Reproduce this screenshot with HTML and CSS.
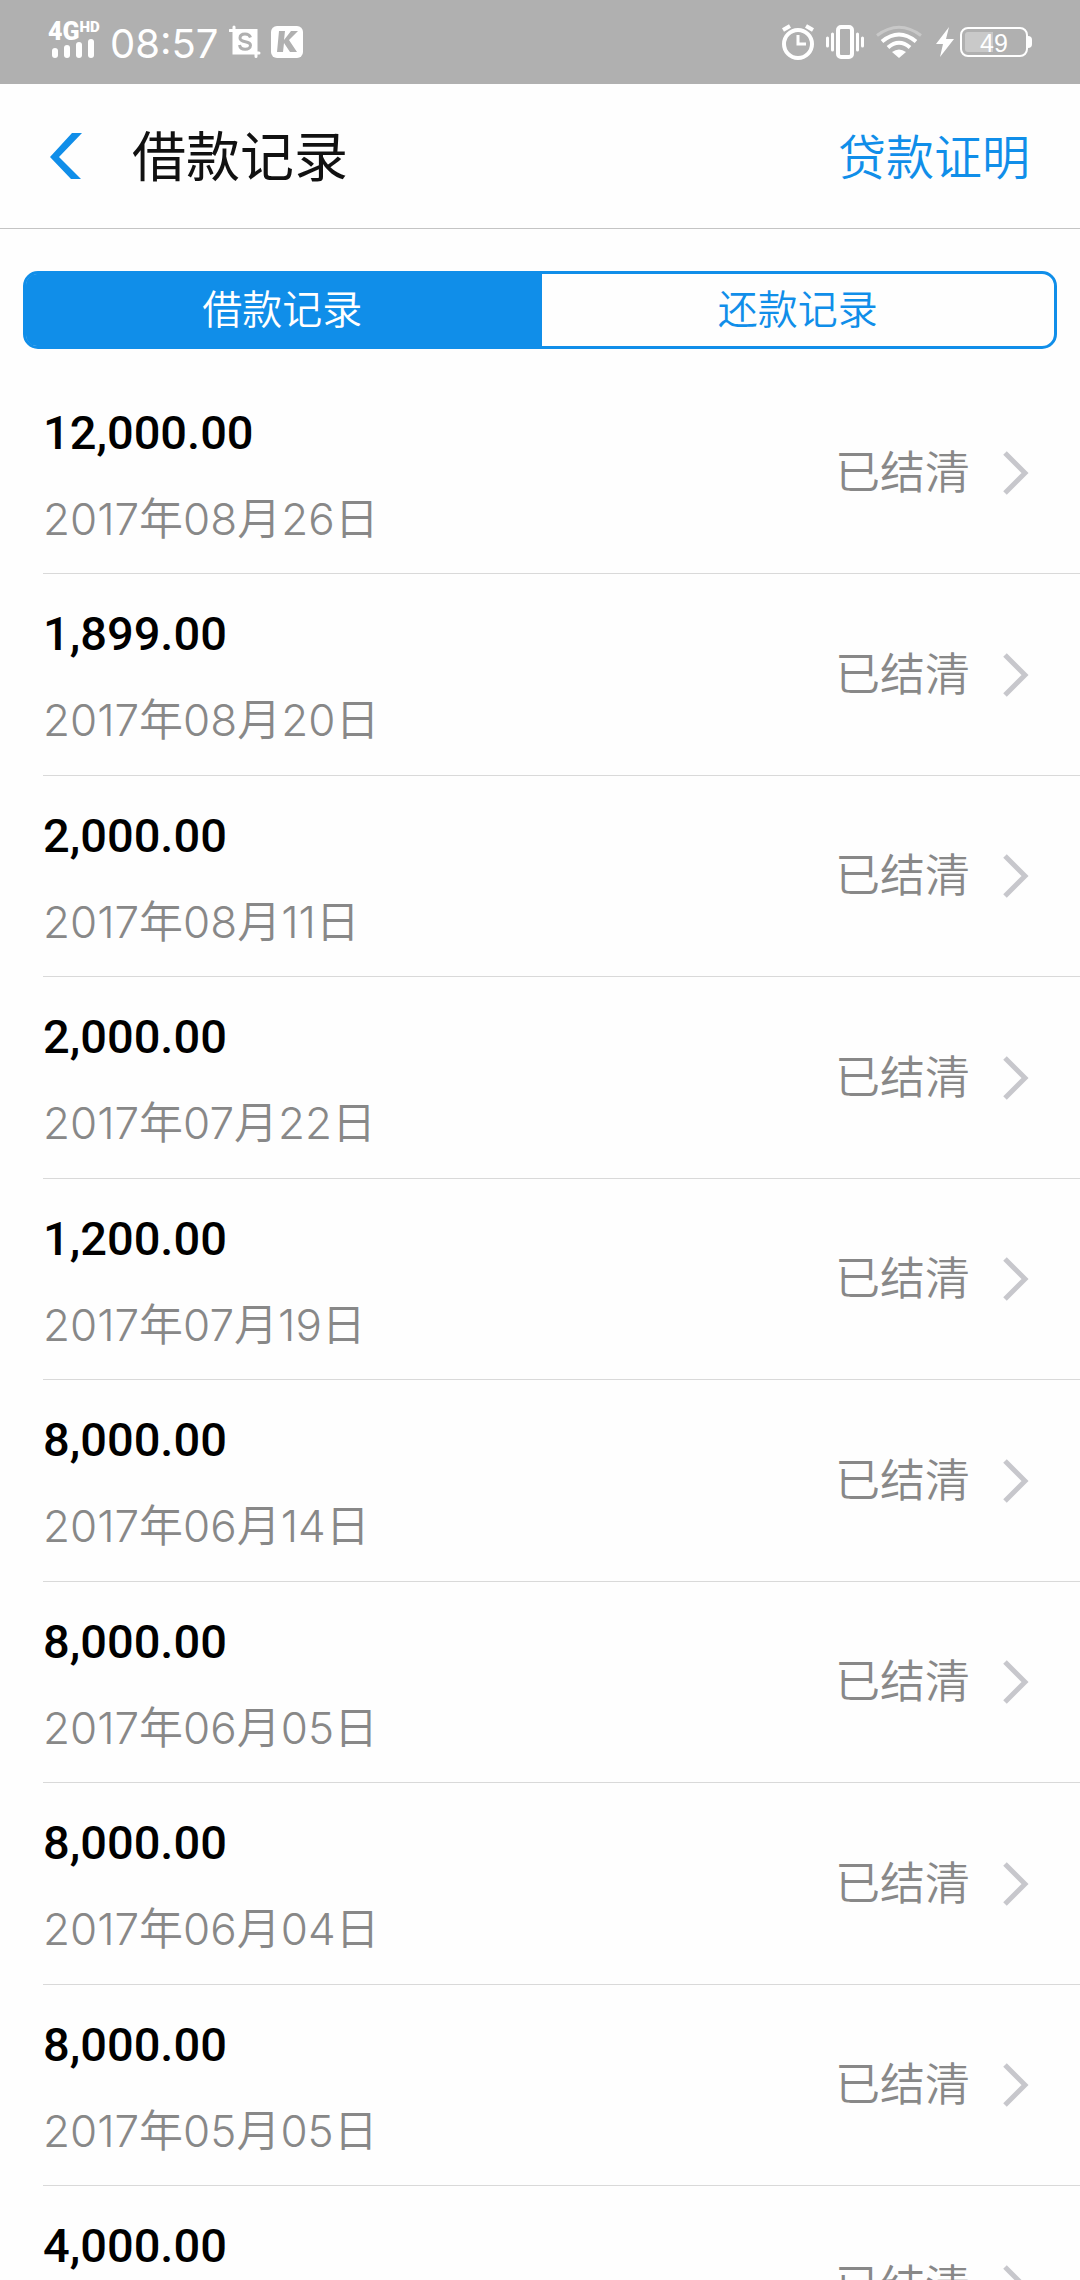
FILE: index.html
```
<!DOCTYPE html>
<html lang="zh-CN">
<head>
<meta charset="utf-8">
<meta name="viewport" content="width=device-width, initial-scale=1">
<title>借款记录</title>
<link rel="stylesheet" href="styles.css">
</head>
<body>
<svg class="defs" aria-hidden="true">
  <symbol id="chevron" viewBox="0 0 26 44"><path d="M2 2 22 22 2 42" fill="none" stroke="#c7c7cc" stroke-width="5"/></symbol>
</svg>
<div class="app">
  <div class="status-bar">
    <div class="status-group status-left">
      <div class="signal">
        <div class="network">4G<span class="hd">HD</span></div>
        <svg class="bars" viewBox="0 0 44 20" aria-hidden="true"><g fill="#fff"><rect x="0" y="9" width="6" height="10" rx="3"/><rect x="12" y="6" width="6" height="13" rx="3"/><rect x="24" y="3" width="6" height="16" rx="3"/><rect x="36" y="0" width="6" height="19" rx="3"/></g></svg>
      </div>
      <time class="clock">08:57</time>
      <svg class="icon-crop" viewBox="0 0 32 34" aria-hidden="true"><path d="M5 2v26h25M1 5.500h26v26" fill="none" stroke="#fff" stroke-width="3" stroke-linecap="round"/><path d="M5 5h22v23H5z" fill="#fff"/><path d="M21.500 12.500c-1-3-3.500-3.500-5.500-3.500-3 0-5 1.500-5 4 0 5.500 10.500 2 10.500 7.300 0 2.700-2.500 4-5.300 4-3 0-5.200-1.300-5.700-4.300" fill="none" stroke="#b0b0b0" stroke-width="3"/></svg>
      <svg class="icon-k" viewBox="0 0 32 32" aria-hidden="true"><rect width="32" height="32" rx="6" fill="#fff"/><path d="M8 5h6l-1 9 7-9h7L18 14l8 12h-7l-6-9-1 9H6z" fill="#b0b0b0"/></svg>
    </div>
    <div class="status-group status-right">
      <svg class="icon-alarm" viewBox="0 0 32 36" aria-hidden="true"><g fill="none" stroke="#fff"><circle cx="16" cy="20" r="14" stroke-width="4"/><path d="M16 11v9h8" stroke-width="3"/><path d="M1 6 8 2M24 2l7 4" stroke-width="4"/></g></svg>
      <svg class="icon-vibrate" viewBox="0 0 38 34" aria-hidden="true"><g fill="none" stroke="#fff"><rect x="12" y="2" width="14" height="30" rx="3" stroke-width="4"/><path d="M1.500 13v8M6.500 9v16M31.500 9v16M36.500 13v8" stroke-width="3" stroke-linecap="round"/></g></svg>
      <svg class="icon-wifi" viewBox="0 0 46 34" aria-hidden="true"><g fill="none" stroke="#fff" stroke-width="4"><path d="M1 10.500Q23-6 45 10.500" opacity=".3" stroke-width="3"/><path d="M6 16.500Q23 2.500 40 16.500"/><path d="M12 22.500Q23 13 34 22.500"/></g><path d="M16 27q7-5 14 0l-7 6z" fill="#fff"/></svg>
      <div class="power">
        <svg class="icon-bolt" viewBox="0 0 18 30" aria-hidden="true"><path d="M13 0 0 17h7L4 30 18 12h-8z" fill="#fff"/></svg>
        <div class="battery"><span class="battery-level">49</span></div>
        <span class="battery-cap"></span>
      </div>
    </div>
  </div>

  <header class="nav">
    <button class="back" type="button" aria-label="返回"><svg viewBox="0 0 32 46" aria-hidden="true"><path d="M22 0h10L9 24l22 22H21L0 24z" fill="#108ee9"/></svg></button>
    <h1 class="title">借款记录</h1>
    <a class="proof" href="#">贷款证明</a>
  </header>

  <div class="tabs" role="tablist">
    <button class="tab tab-active" type="button" role="tab" aria-selected="true">借款记录</button>
    <button class="tab" type="button" role="tab" aria-selected="false">还款记录</button>
  </div>

  <ul class="records">
    <li class="record"><a class="row" href="#"><span class="info"><span class="amount">12,000.00</span><time class="date">2017年08月26日</time></span><span class="state">已结清</span><svg class="chevron" aria-hidden="true"><use href="#chevron"/></svg></a></li>
    <li class="record"><a class="row" href="#"><span class="info"><span class="amount">1,899.00</span><time class="date">2017年08月20日</time></span><span class="state">已结清</span><svg class="chevron" aria-hidden="true"><use href="#chevron"/></svg></a></li>
    <li class="record"><a class="row" href="#"><span class="info"><span class="amount">2,000.00</span><time class="date">2017年08月11日</time></span><span class="state">已结清</span><svg class="chevron" aria-hidden="true"><use href="#chevron"/></svg></a></li>
    <li class="record"><a class="row" href="#"><span class="info"><span class="amount">2,000.00</span><time class="date">2017年07月22日</time></span><span class="state">已结清</span><svg class="chevron" aria-hidden="true"><use href="#chevron"/></svg></a></li>
    <li class="record"><a class="row" href="#"><span class="info"><span class="amount">1,200.00</span><time class="date">2017年07月19日</time></span><span class="state">已结清</span><svg class="chevron" aria-hidden="true"><use href="#chevron"/></svg></a></li>
    <li class="record"><a class="row" href="#"><span class="info"><span class="amount">8,000.00</span><time class="date">2017年06月14日</time></span><span class="state">已结清</span><svg class="chevron" aria-hidden="true"><use href="#chevron"/></svg></a></li>
    <li class="record"><a class="row" href="#"><span class="info"><span class="amount">8,000.00</span><time class="date">2017年06月05日</time></span><span class="state">已结清</span><svg class="chevron" aria-hidden="true"><use href="#chevron"/></svg></a></li>
    <li class="record"><a class="row" href="#"><span class="info"><span class="amount">8,000.00</span><time class="date">2017年06月04日</time></span><span class="state">已结清</span><svg class="chevron" aria-hidden="true"><use href="#chevron"/></svg></a></li>
    <li class="record"><a class="row" href="#"><span class="info"><span class="amount">8,000.00</span><time class="date">2017年05月05日</time></span><span class="state">已结清</span><svg class="chevron" aria-hidden="true"><use href="#chevron"/></svg></a></li>
    <li class="record"><a class="row" href="#"><span class="info"><span class="amount">4,000.00</span></span><span class="state">已结清</span><svg class="chevron" aria-hidden="true"><use href="#chevron"/></svg></a></li>
  </ul>
</div>
</body>
</html>
```
FILE: styles.css
```
* {
  box-sizing: border-box;
}

body {
  margin: 0;
  background: #fefefe;
  color: #000;
  font-family: Inter, "Noto Sans CJK SC", sans-serif;
  font-weight: 350;
}

a {
  color: inherit;
  text-decoration: none;
}

button {
  margin: 0;
  padding: 0;
  border: 0;
  background: none;
  color: inherit;
  font: inherit;
}

svg {
  display: block;
}

.defs {
  display: none;
}

.app {
  display: flex;
  flex-direction: column;
  height: 100vh;
  overflow: hidden;
}

/* Status bar */

.status-bar {
  display: flex;
  flex: none;
  justify-content: space-between;
  height: 84px;
  padding: 0 48px;
  background: #b0b0b0;
  color: #fff;
}

.status-group {
  display: flex;
  align-items: center;
}

.status-right {
  gap: 12px;
}

.signal {
  width: 52px;
  padding-bottom: 6px;
}

.network {
  display: flex;
  align-items: flex-start;
  height: 20px;
  font: 900 25px/26px Roboto, sans-serif;
}

.hd {
  font-size: 15px;
  line-height: 16px;
}

.bars {
  width: 44px;
  height: 20px;
  margin-left: 4px;
}

.clock {
  margin-left: 10px;
  padding-top: 4px;
  font-size: 40px;
  font-weight: 400;
  line-height: 48px;
}

.icon-crop {
  width: 32px;
  height: 34px;
  margin-left: 11px;
}

.icon-k {
  width: 32px;
  height: 32px;
  margin-left: 10px;
}

.icon-alarm {
  width: 32px;
  height: 36px;
}

.icon-vibrate {
  width: 38px;
  height: 34px;
}

.icon-wifi {
  width: 46px;
  height: 34px;
}

.power {
  display: flex;
  align-items: center;
  margin-left: 2px;
}

.icon-bolt {
  width: 18px;
  height: 30px;
  margin-right: 6px;
}

.battery {
  width: 68px;
  height: 30px;
  border: 2px solid #fff;
  border-radius: 8px;
  padding: 3px;
}

.battery-level {
  display: block;
  height: 20px;
  border-radius: 3px;
  background: linear-gradient(90deg, #c9c9c9 49%, transparent 49%);
  font-family: "Liberation Sans", sans-serif;
  font-size: 25px;
  font-weight: 400;
  line-height: 22px;
  text-align: center;
}

.battery-cap {
  width: 4px;
  height: 12px;
  border-radius: 0 4px 4px 0;
  background: #fff;
}

/* Navigation bar */

.nav {
  display: flex;
  flex: none;
  align-items: center;
  height: 145px;
  padding: 0 50px;
  border-bottom: 1px solid #c4c4c4;
}

.back {
  width: 32px;
  height: 46px;
}

.title {
  flex: 1;
  margin: 0 0 0 50px;
  padding-top: 4px;
  color: #111;
  font-size: 54px;
  font-weight: 400;
  line-height: 72px;
}

.proof {
  padding-top: 4px;
  color: #108ee9;
  font-size: 48px;
  line-height: 72px;
}

/* Segmented control */

.tabs {
  display: flex;
  flex: none;
  height: 78px;
  margin: 42px 23px 0;
  border: 3px solid #108ee9;
  border-radius: 15px;
}

.tab {
  flex: 1;
  color: #108ee9;
  font-size: 40px;
  line-height: 72px;
}

.tab + .tab {
  border-left: 3px solid #108ee9;
}

.tab-active {
  border-radius: 11px 0 0 11px;
  background: #108ee9;
  color: #fff;
}

/* Record list */

.records {
  display: grid;
  flex: 1;
  grid-auto-rows: 201px 202px;
  min-height: 0;
  margin: 24px 0 0;
  padding: 0 0 0 43px;
  overflow: hidden;
  list-style: none;
}

.record {
  border-bottom: 1px solid #d9d9d9;
}

.row {
  display: flex;
  align-items: center;
  height: 100%;
  padding-right: 51px;
}

.info {
  display: flex;
  flex: 1;
  flex-direction: column;
  align-self: flex-start;
  gap: 26px;
  padding-top: 30px;
}

.amount {
  font-family: Roboto, sans-serif;
  font-size: 47px;
  font-weight: 500;
  line-height: 60px;
}

.date {
  color: #888;
  font-size: 44px;
  line-height: 60px;
}

.state {
  color: #888;
  font-size: 45px;
  line-height: 60px;
}

.chevron {
  width: 26px;
  height: 44px;
  margin-left: 33px;
}
```
